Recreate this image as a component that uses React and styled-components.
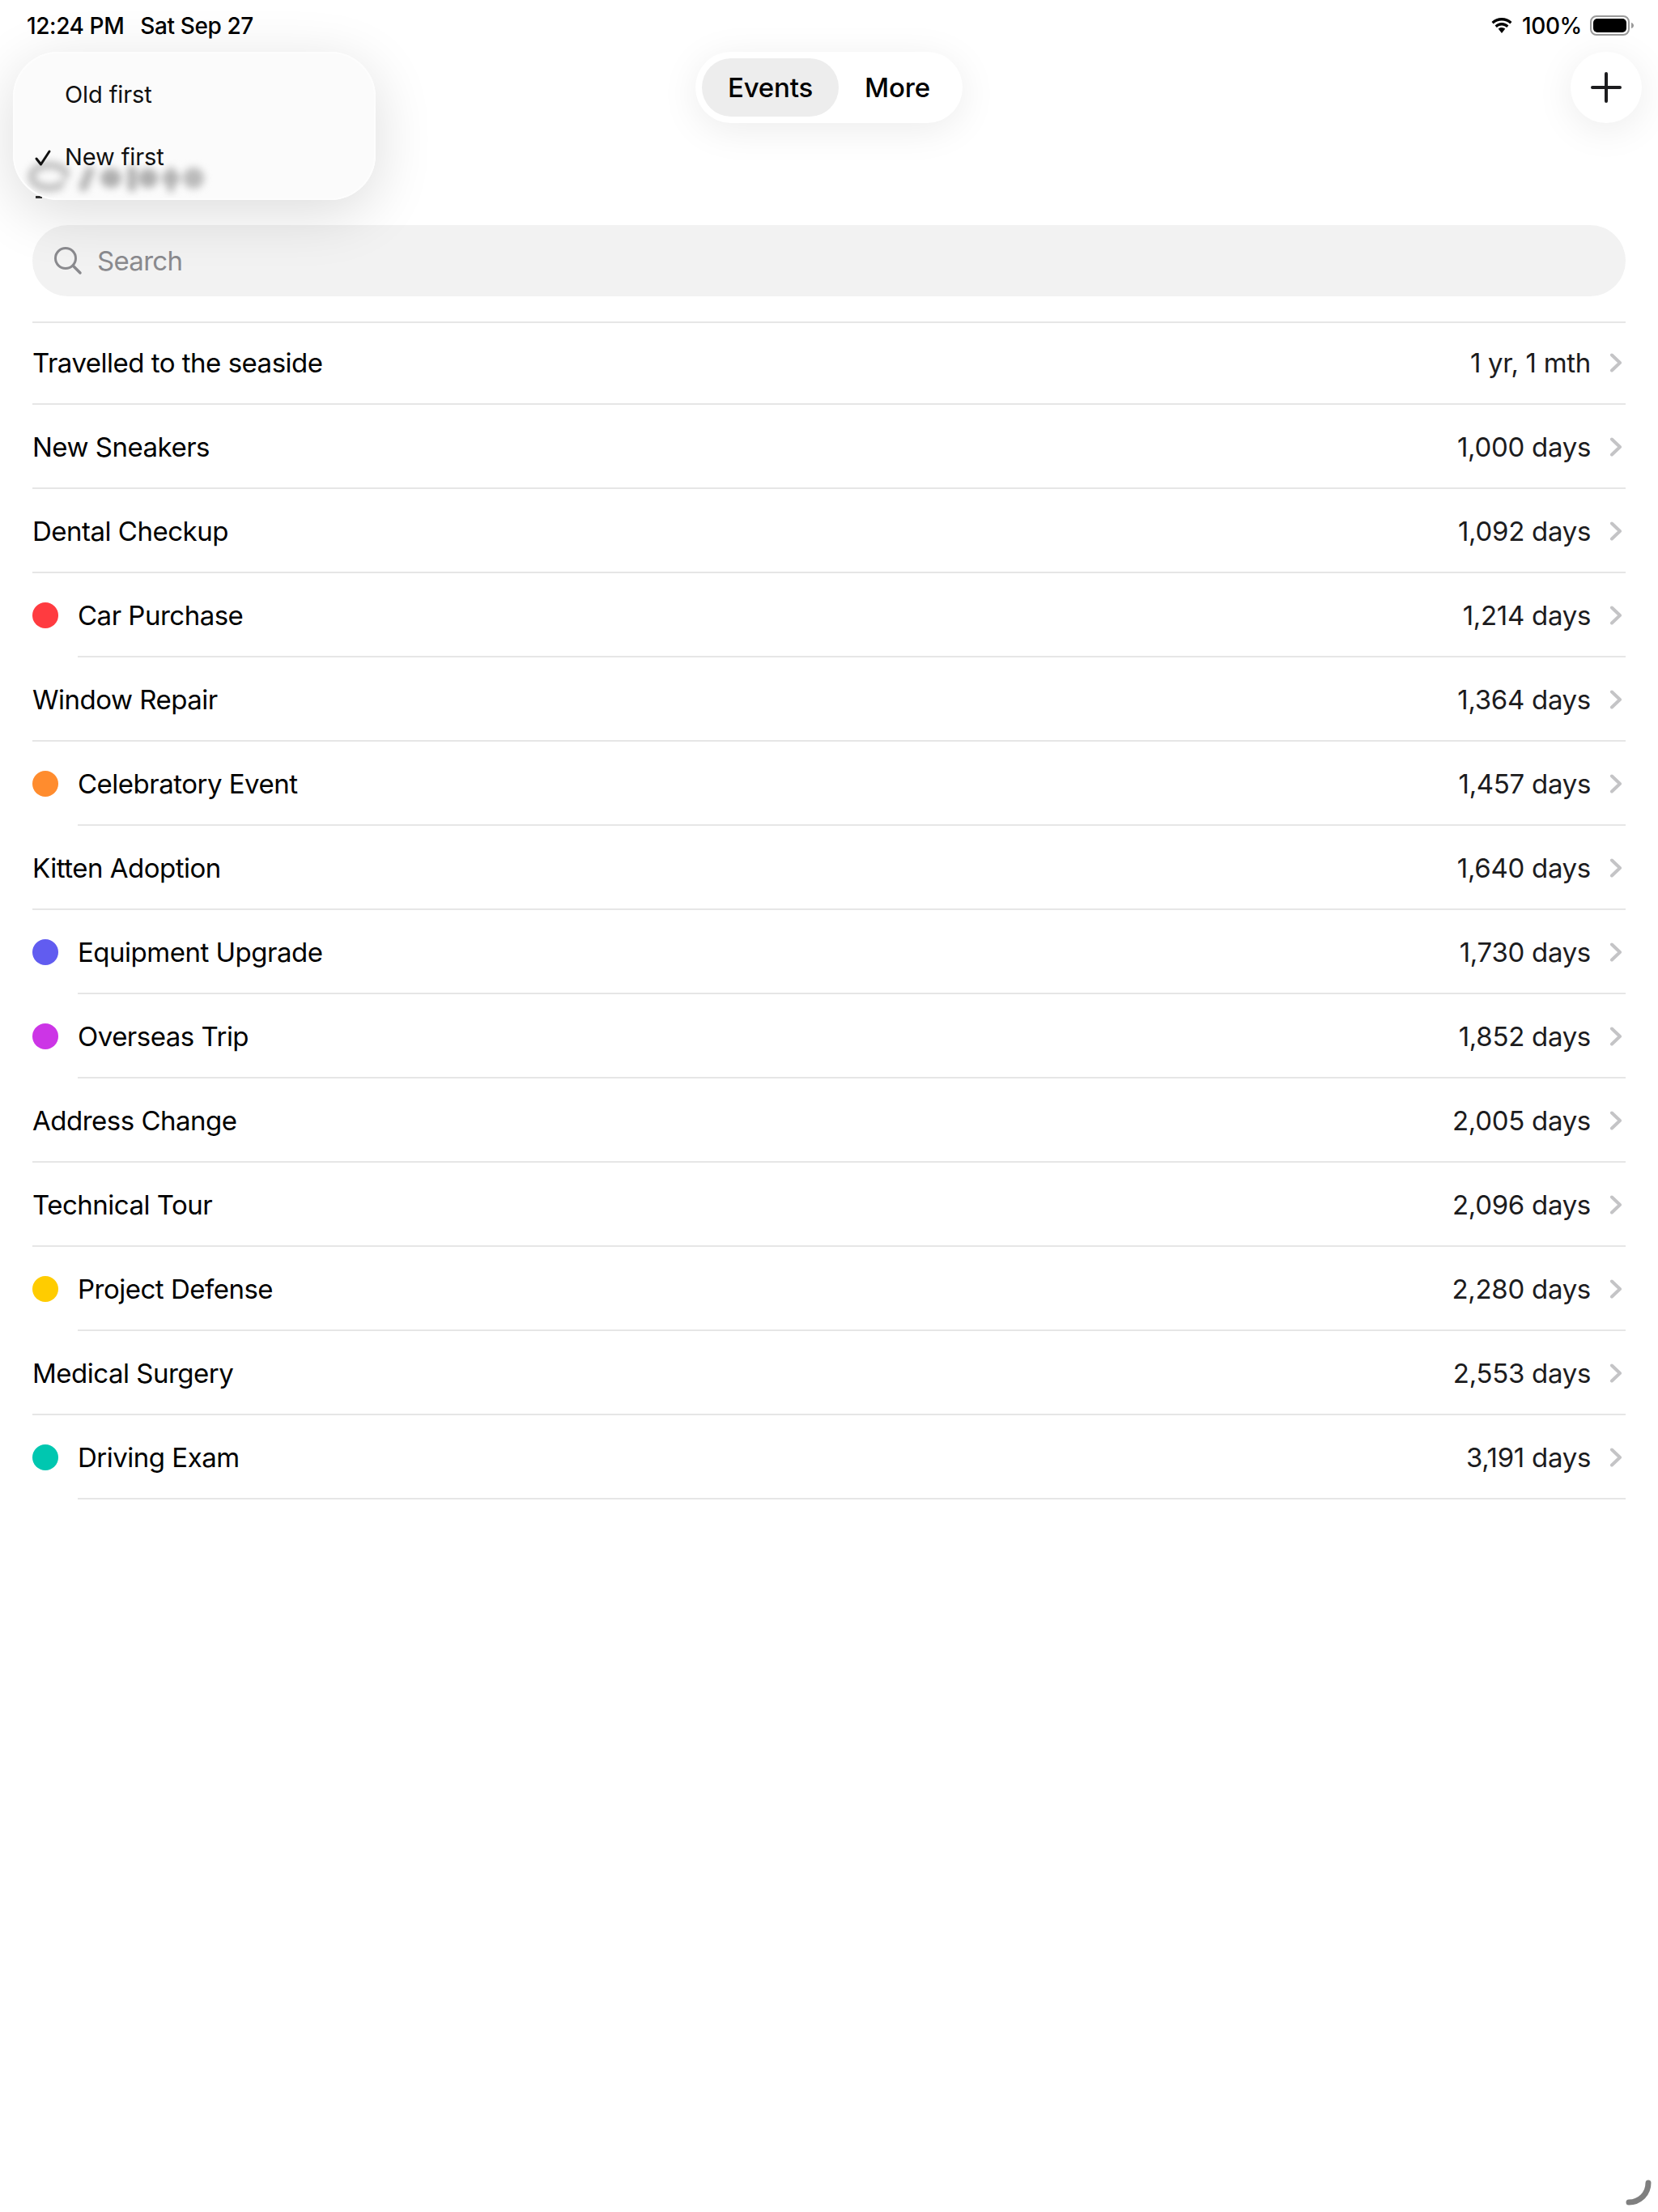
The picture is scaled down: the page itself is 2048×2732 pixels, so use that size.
import React from 'react';
import styled, { createGlobalStyle } from 'styled-components';

const GlobalStyle = createGlobalStyle`
  html, body {
    margin: 0;
    background: #fff;
  }
  body {
    font-family: Inter, "Noto Sans", sans-serif;
    color: #000;
  }
`;

const Page = styled.div`
  position: relative;
  width: 2048px;
  height: 2732px;
  overflow: hidden;
  background: #fff;
`;

const StatusBar = styled.div`
  height: 64px;
  padding: 0 28px 0 33px;
  display: flex;
  align-items: center;
  justify-content: space-between;
  font-size: 28px;
  font-weight: 500;
  letter-spacing: -0.4px;
  box-sizing: border-box;
`;

const StatusGroup = styled.div`
  display: flex;
  align-items: center;
  gap: ${(props) => props.gap}px;
`;

const Header = styled.div`
  height: 88px;
  padding: 0 20px;
  display: grid;
  grid-template-columns: 1fr auto 1fr;
  align-items: center;
`;

const Segmented = styled.div`
  grid-column: 2;
  display: flex;
  align-items: center;
  width: 330px;
  height: 88px;
  padding: 8px;
  box-sizing: border-box;
  border-radius: 44px;
  background: #fff;
  box-shadow: 0 8px 48px rgba(0, 0, 0, 0.08);
`;

const Segment = styled.div`
  width: ${(props) => props.width}px;
  height: 72px;
  display: flex;
  align-items: center;
  justify-content: center;
  border-radius: 36px;
  font-size: 33px;
  font-weight: 500;
  letter-spacing: -0.2px;
  background: ${(props) => (props.active ? '#ededed' : 'transparent')};
`;

const PlusButton = styled.div`
  justify-self: end;
  width: 88px;
  height: 88px;
  border-radius: 50%;
  display: flex;
  align-items: center;
  justify-content: center;
  background: #fff;
  box-shadow: 0 8px 48px rgba(0, 0, 0, 0.08);
`;

const Content = styled.div`
  padding: 126px 40px 0;
`;

const SearchBar = styled.div`
  height: 88px;
  border-radius: 44px;
  background: #f2f2f2;
  display: flex;
  align-items: center;
  gap: 18px;
  padding-left: 26px;
  font-size: 33px;
  letter-spacing: -0.7px;
  color: #8a8a8e;
`;

const List = styled.div`
  margin-top: 31px;
  border-top: 2px solid #e6e6e6;
`;

const RowBody = styled.div`
  flex: 1;
  height: 100%;
  padding-top: 2px;
  display: flex;
  align-items: center;
  justify-content: space-between;
  box-sizing: border-box;
  border-bottom: 2px solid #e6e6e6;
  font-size: 33px;
  letter-spacing: -0.5px;
`;

const Row = styled.div`
  display: flex;
  align-items: center;
  height: 104px;
  &:first-child {
    height: 101px;
  }
  &:first-child ${RowBody} {
    padding-top: 0;
    padding-bottom: 2px;
  }
`;

const Dot = styled.span`
  flex: none;
  width: 32px;
  height: 32px;
  margin-right: 24px;
  border-radius: 50%;
  background: ${(props) => props.color};
`;

const RowValue = styled.div`
  display: flex;
  align-items: center;
  gap: 23px;
  padding-right: 4px;
  color: #1c1c1e;
  letter-spacing: -0.3px;
`;

const Menu = styled.div`
  position: absolute;
  top: 64px;
  left: 16px;
  width: 448px;
  height: 183px;
  box-sizing: border-box;
  overflow: hidden;
  border-radius: 56px;
  background: #fbfbfb;
  border: 2px solid #fdfdfd;
  display: flex;
  flex-direction: column;
  padding-top: 12px;
  font-size: 29px;
  letter-spacing: -0.1px;
  z-index: 2;
`;

const MenuShadow = styled.div`
  position: absolute;
  top: 64px;
  left: 16px;
  width: 448px;
  height: 183px;
  border-radius: 56px;
  box-shadow: 0 16px 72px rgba(0, 0, 0, 0.14);
  z-index: 1;
`;

const MenuItem = styled.div`
  position: relative;
  z-index: 1;
  height: 77px;
  display: flex;
  align-items: center;
  padding-left: 62px;
  color: #111;
`;

const MenuCheck = styled.svg`
  position: absolute;
  left: 24px;
  top: 29px;
`;

const BlurredBackdrop = styled.svg`
  position: absolute;
  left: 15px;
  top: 133px;
  filter: blur(5px);
`;

const Spinner = styled.svg`
  position: absolute;
  right: 0;
  bottom: 0;
`;

const PeekMark = styled.div`
  position: absolute;
  left: 44px;
  top: 242px;
  width: 8px;
  height: 3px;
  background: #333;
`;

const rows = [
  { name: 'Travelled to the seaside', value: '1 yr, 1 mth' },
  { name: 'New Sneakers', value: '1,000 days' },
  { name: 'Dental Checkup', value: '1,092 days' },
  { name: 'Car Purchase', value: '1,214 days', color: '#ff3b40' },
  { name: 'Window Repair', value: '1,364 days' },
  { name: 'Celebratory Event', value: '1,457 days', color: '#ff8c2e' },
  { name: 'Kitten Adoption', value: '1,640 days' },
  { name: 'Equipment Upgrade', value: '1,730 days', color: '#615cf0' },
  { name: 'Overseas Trip', value: '1,852 days', color: '#cc35e6' },
  { name: 'Address Change', value: '2,005 days' },
  { name: 'Technical Tour', value: '2,096 days' },
  { name: 'Project Defense', value: '2,280 days', color: '#ffcc00' },
  { name: 'Medical Surgery', value: '2,553 days' },
  { name: 'Driving Exam', value: '3,191 days', color: '#00c7b0' },
];

function Chevron() {
  return (
    <svg width="16" height="24" viewBox="0 0 16 24" fill="none">
      <path d="M3 2.5 13 12 3 21.5" stroke="#c4c4c6" strokeWidth="4" strokeLinecap="round" strokeLinejoin="round" />
    </svg>
  );
}

function Wifi() {
  return (
    <svg width="30" height="22" viewBox="0 0 30 22">
      <path d="M15 4.500c4 0 7.600 1.500 10.300 4l2.200-2.500A18.500 18.500 0 0 0 15 1 18.500 18.500 0 0 0 2.500 6l2.200 2.500C7.400 6 11 4.500 15 4.500Z" fill="#000" />
      <path d="M15 10.500c2.400 0 4.500.9 6.200 2.400l2.200-2.500A12.500 12.500 0 0 0 15 7a12.500 12.500 0 0 0-8.400 3.400l2.200 2.500A9 9 0 0 1 15 10.500Z" fill="#000" />
      <path d="M15 13c-1.700 0-3.200.6-4.300 1.600L15 20l4.300-5.400A6.400 6.400 0 0 0 15 13Z" fill="#000" />
    </svg>
  );
}

function Battery() {
  return (
    <svg width="56" height="28" viewBox="0 0 56 28">
      <rect x="1" y="2" width="47" height="23" rx="7" fill="none" stroke="#9a9a9a" strokeWidth="2" />
      <rect x="4" y="5" width="41" height="17" rx="5" fill="#000" />
      <path d="M51 10c2 .5 3 2 3 3.500S53 16.500 51 17Z" fill="#9a9a9a" />
    </svg>
  );
}

export default function App() {
  return (
    <Page>
      <GlobalStyle />
      <StatusBar>
        <StatusGroup gap={20}>
          <span>12:24 PM</span>
          <span>Sat Sep 27</span>
        </StatusGroup>
        <StatusGroup gap={10}>
          <Wifi />
          <span>100%</span>
          <Battery />
        </StatusGroup>
      </StatusBar>

      <Header>
        <Segmented>
          <Segment width={169} active>Events</Segment>
          <Segment width={145}>More</Segment>
        </Segmented>
        <PlusButton>
          <svg width="38" height="38" viewBox="0 0 38 38" fill="none">
            <path d="M19 2v34M2 19h34" stroke="#1c1c1e" strokeWidth="4" strokeLinecap="round" />
          </svg>
        </PlusButton>
      </Header>

      <Content>
        <SearchBar>
          <svg width="36" height="36" viewBox="0 0 36 36" fill="none">
            <circle cx="15" cy="15" r="12.500" stroke="#8a8a8e" strokeWidth="3" />
            <path d="M24.500 24.500 33 33" stroke="#8a8a8e" strokeWidth="3.500" strokeLinecap="round" />
          </svg>
          <span>Search</span>
        </SearchBar>
        <List>
          {rows.map((row) => (
            <Row key={row.name}>
              {row.color && <Dot color={row.color} />}
              <RowBody>
                <span>{row.name}</span>
                <RowValue>
                  <span>{row.value}</span>
                  <Chevron />
                </RowValue>
              </RowBody>
            </Row>
          ))}
        </List>
      </Content>

      <MenuShadow />
      <Menu>
        <BlurredBackdrop width="226" height="44" viewBox="0 0 226 44" fill="none">
          <ellipse cx="28" cy="19" rx="22" ry="14" stroke="#bdbdbd" strokeWidth="9" />
          <path d="M62 6 46 32" stroke="#fbfbfb" strokeWidth="5" />
          <path d="M78 12 70 32" stroke="#b4b4b4" strokeWidth="11" strokeLinecap="round" />
          <ellipse cx="104" cy="21" rx="13" ry="12" fill="#b0b0b0" />
          <path d="M130 11v21" stroke="#b0b0b0" strokeWidth="11" strokeLinecap="round" />
          <ellipse cx="150" cy="21" rx="12" ry="12" fill="#b0b0b0" />
          <path d="M178 8v30" stroke="#b4b4b4" strokeWidth="8" />
          <ellipse cx="178" cy="21" rx="11" ry="10" fill="#b4b4b4" />
          <ellipse cx="206" cy="21" rx="13" ry="13" fill="#bbbbbb" />
        </BlurredBackdrop>
        <MenuItem>Old first</MenuItem>
        <MenuItem>
          <MenuCheck width="24" height="22" viewBox="0 0 24 22" fill="none">
            <path d="M3 12l5.500 7L19 3" stroke="#111" strokeWidth="3" strokeLinecap="round" strokeLinejoin="round" />
          </MenuCheck>
          New first
        </MenuItem>
      </Menu>
      <PeekMark />

      <Spinner width="80" height="80" viewBox="0 0 80 80" fill="none">
        <path d="M68 44c0 14-11 24-24 24" stroke="#7f7f7f" strokeWidth="7" strokeLinecap="round" />
      </Spinner>
    </Page>
  );
}
